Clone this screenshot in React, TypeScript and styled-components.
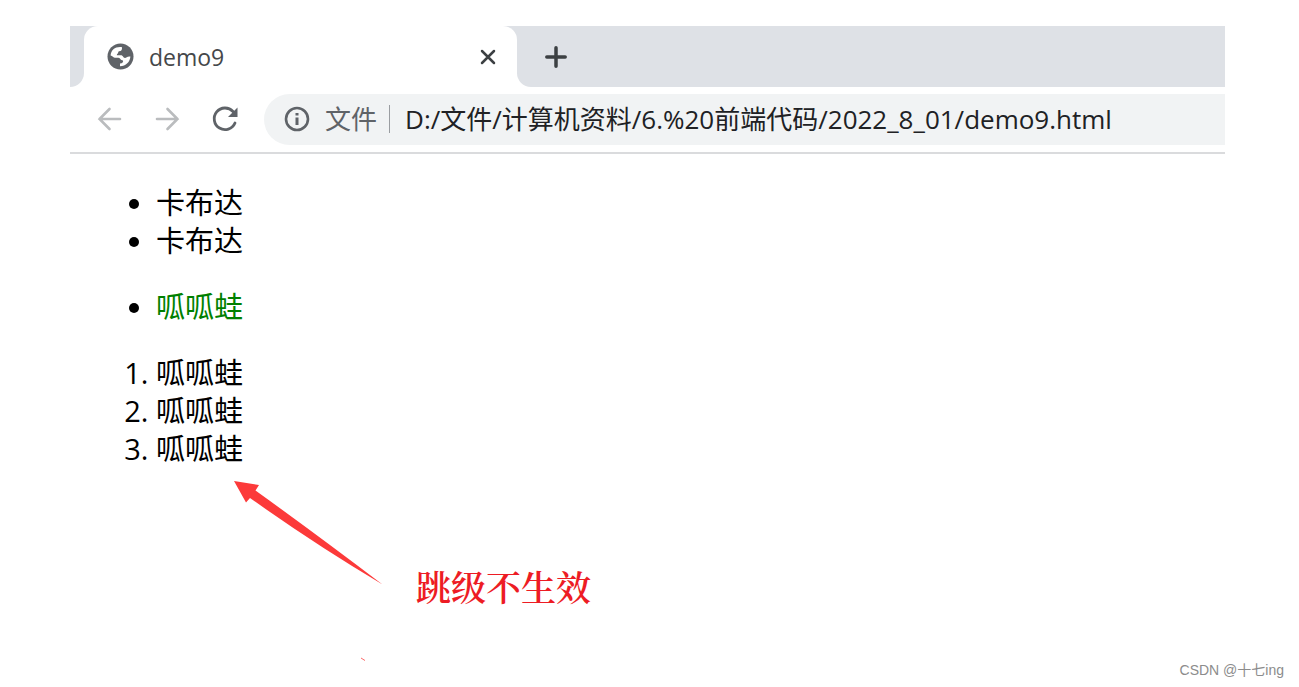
import React from 'react';
import styled, { createGlobalStyle } from 'styled-components';

const GlobalStyle = createGlobalStyle`
  * { box-sizing: border-box; }
  body {
    margin: 0;
    background: #fff;
    color: #000;
    font-family: "Open Sans", "Noto Sans CJK SC", sans-serif;
  }
`;

const Page = styled.div`
  position: relative;
  min-height: 100vh;
  padding: 26px 74px 0 70px;
`;

const TabStrip = styled.div`
  display: flex;
  height: 61px;
  background: #dee1e6;
`;

const StripEdge = styled.div`
  display: flex;
  width: 14px;
  background: #fff;
`;

const StripFill = styled.div<{ $corner: 'left' | 'right' }>`
  flex: 1;
  background: #dee1e6;
  border-radius: ${p => (p.$corner === 'right' ? '0 0 14px 0' : '0 0 0 14px')};
`;

const Tab = styled.div`
  display: flex;
  align-items: center;
  width: 433px;
  padding: 0 17px 0 23px;
  background: #fff;
  border-radius: 14px 14px 0 0;
`;

const TabTitle = styled.span`
  flex: 1;
  margin-left: 15px;
  color: #45474a;
  font-size: 23px;
  line-height: 32px;
`;

const IconButton = styled.button`
  display: flex;
  align-items: center;
  justify-content: center;
  width: 24px;
  height: 28px;
  padding: 0;
  border: 0;
  background: none;
`;

const NewTabButton = styled(IconButton)`
  align-self: center;
  margin-left: 12px;
  width: 26px;
`;

const Toolbar = styled.div`
  display: flex;
  align-items: center;
  height: 67px;
  padding-left: 25px;
  border-bottom: 2px solid #dadbdd;
`;

const NavButtons = styled.nav`
  display: flex;
  gap: 30px;
  margin-right: 25px;
  padding-bottom: 2px;
  button { width: 28px; }
`;

const AddressBar = styled.label`
  display: flex;
  flex: 1;
  align-items: center;
  height: 51px;
  padding: 0 0 2px 20px;
  border-radius: 26px 0 0 26px;
  background: #f1f3f4;
  font-size: 26px;
`;

const Scheme = styled.span`
  margin-left: 15px;
  padding-right: 12px;
  border-right: 1px solid #9a9da1;
  color: #5f6368;
  line-height: 28px;
`;

const AddressInput = styled.input`
  flex: 1;
  min-width: 0;
  height: 40px;
  padding: 0 0 2px 15px;
  border: 0;
  outline: 0;
  background: none;
  color: #202124;
  font: inherit;
`;

const Document = styled.main`
  padding-top: 30px;
`;

const listStyle = `
  margin: 0 0 28px;
  padding-left: 86px;
  font-size: 29px;
  line-height: 38px;
`;
const BulletList = styled.ul`${listStyle}`;
const NumberList = styled.ol`${listStyle} margin-bottom: 12px;`;

const Item = styled.li`
  &::marker { color: #000; }
`;
const GreenItem = styled(Item)`
  color: #008000;
`;

const Annotation = styled.div`
  display: flex;
  align-items: flex-start;
  gap: 32px;
  padding-left: 164px;
`;

const Note = styled.p`
  margin: 88px 0 0;
  color: #ed1c24;
  font-family: "Noto Serif CJK SC", "SimSun", "Liberation Serif", "Noto Sans CJK SC", serif;
  font-size: 35px;
  font-weight: 600;
  line-height: 36px;
`;

const Watermark = styled.small`
  position: absolute;
  right: 15px;
  bottom: 6px;
  color: #8c8c8c;
  font-family: "Liberation Sans", "Noto Sans CJK SC", sans-serif;
  font-size: 14px;
  line-height: 22px;
`;

export default function App() {
  return (
    <Page>
      <GlobalStyle />
      <TabStrip>
        <StripEdge><StripFill $corner="right" /></StripEdge>
        <Tab>
          <svg width="27" height="27" viewBox="0 0 27 27">
            <circle cx="13.500" cy="13.500" r="13" fill="#5f6368" />
            <path fill="#fff" d="M3.600 12.500C4 7 8.500 3.300 15 4.200C15.200 7 14.500 8 12 8.300C10.800 8.600 11.500 10.800 10 11.200L9.800 12.300H14C16 12.300 16 15 18 15C19.500 15 20 13 23.400 13.500C23 19 19 23 13 23.300V20.500C15.500 20.500 16.500 19 16 17.500C13.500 17.500 13.500 15 11.500 14.800H8C6.500 14.800 5.500 12.600 3.600 12.500Z" />
          </svg>
          <TabTitle>demo9</TabTitle>
          <IconButton aria-label="Close tab">
            <svg width="18" height="18" viewBox="0 0 18 18" stroke="#3c4043" strokeWidth="2.500" strokeLinecap="round">
              <path d="M3 3 15 15M15 3 3 15" />
            </svg>
          </IconButton>
        </Tab>
        <StripEdge><StripFill $corner="left" /></StripEdge>
        <NewTabButton aria-label="New tab">
          <svg width="24" height="24" viewBox="0 0 24 24" stroke="#3c4043" strokeWidth="3.500" strokeLinecap="round">
            <path d="M12 2.800V21.200M2.800 12H21.200" />
          </svg>
        </NewTabButton>
      </TabStrip>
      <Toolbar>
        <NavButtons>
          <IconButton aria-label="Back">
            <svg width="28" height="28" viewBox="0 0 28 28" fill="none" stroke="#babcbe" strokeWidth="2.600" strokeLinecap="round">
              <path d="M25 14H4.500M14.500 4 4.500 14 14.500 24" />
            </svg>
          </IconButton>
          <IconButton aria-label="Forward">
            <svg width="28" height="28" viewBox="0 0 28 28" fill="none" stroke="#babcbe" strokeWidth="2.600" strokeLinecap="round">
              <path d="M4 14H24.500M14.500 4 24.500 14 14.500 24" />
            </svg>
          </IconButton>
          <IconButton aria-label="Reload">
            <svg width="28" height="28" viewBox="0 0 28 28" fill="none" stroke="#5f6368" strokeWidth="2.800">
              <path d="M22 6.500A10.800 10.800 0 1 0 24 18" strokeLinecap="round" />
              <path d="M26.500 2.500V12H17Z" fill="#5f6368" stroke="none" />
            </svg>
          </IconButton>
        </NavButtons>
        <AddressBar>
          <svg width="26" height="26" viewBox="0 0 26 26" fill="none" stroke="#5f6368" strokeWidth="2.600">
            <circle cx="13" cy="13" r="11" />
            <path d="M13 11.500V19M13 7V9.500" strokeWidth="3" />
          </svg>
          <Scheme>文件</Scheme>
          <AddressInput aria-label="Address" defaultValue="D:/文件/计算机资料/6.%20前端代码/2022_8_01/demo9.html" />
        </AddressBar>
      </Toolbar>
      <Document>
        <BulletList>
          <Item>卡布达</Item>
          <Item>卡布达</Item>
        </BulletList>
        <BulletList>
          <GreenItem>呱呱蛙</GreenItem>
        </BulletList>
        <NumberList>
          <Item>呱呱蛙</Item>
          <Item>呱呱蛙</Item>
          <Item>呱呱蛙</Item>
        </NumberList>
        <Annotation>
          <svg width="150" height="184" viewBox="0 0 150 184" fill="#fc3a3a">
            <path d="M0 1 25 5 21.500 10.500 Q82 54 148.500 104.500 Q82 65 16 18 L12 22.500Z" />
            <path d="M127 178 131 180.500" stroke="#fc6a6a" />
          </svg>
          <Note>跳级不生效</Note>
        </Annotation>
      </Document>
      <Watermark>CSDN @十七ing</Watermark>
    </Page>
  );
}
